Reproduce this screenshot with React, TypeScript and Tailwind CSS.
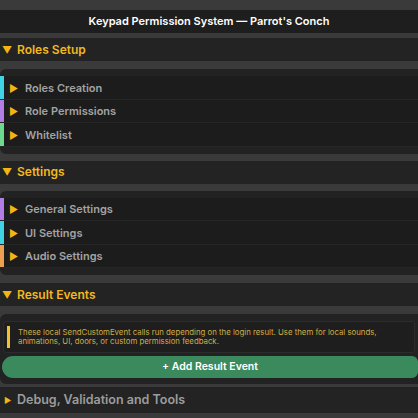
const font = { fontFamily: "Inter, 'Noto Sans', sans-serif" };

type Row = { label: string; bar: string };

const rolesRows: Row[] = [
  { label: "Roles Creation", bar: "bg-[#3fd3e3]" },
  { label: "Role Permissions", bar: "bg-[#b27ee6]" },
  { label: "Whitelist", bar: "bg-[#6ed98e]" },
];

const settingsRows: Row[] = [
  { label: "General Settings", bar: "bg-[#b27ee6]" },
  { label: "UI Settings", bar: "bg-[#3fd3e3]" },
  { label: "Audio Settings", bar: "bg-[#eda04f]" },
];

function SectionHeader({ title }: { title: string }) {
  return (
    <div className="h-[23px] bg-[#232323] flex items-center pl-[2px]">
      <span className="text-[#f4b512] text-[10px] w-[15px] leading-none">▼</span>
      <span className="text-[#f2b81f] text-[12px] font-semibold">{title}</span>
    </div>
  );
}

function Foldout({ row }: { row: Row }) {
  return (
    <div className="h-[23.5px] flex items-stretch bg-[#1c1c1c] border-b border-[#262626]">
      <div className={`w-[4px] ${row.bar}`} />
      <div className="flex items-center pl-[5px] pt-[1px]">
        <span className="text-[#f4b512] text-[10px] w-[16px] leading-none">▶</span>
        <span className="text-[#a3a3a3] text-[11px] font-semibold">{row.label}</span>
      </div>
    </div>
  );
}

function Panel({ children }: { children: React.ReactNode }) {
  return (
    <div className="bg-[#222222] rounded-l-[6px] py-[7px] flex flex-col">{children}</div>
  );
}

export default function App() {
  return (
    <div className="w-[418px] h-[418px] bg-[#3a3a3a] overflow-hidden pt-[10px] flex flex-col" style={font}>
      <div className="h-[23px] bg-[#1e1e1e] flex items-center justify-center text-white text-[11px] font-semibold">
        Keypad Permission System — Parrot's Conch
      </div>
      <div className="h-[5px]" />
      <SectionHeader title="Roles Setup" />
      <div className="h-[8px]" />
      <Panel>
        {rolesRows.map((r) => (
          <Foldout key={r.label} row={r} />
        ))}
      </Panel>
      <div className="h-[7px]" />
      <SectionHeader title="Settings" />
      <div className="h-[7px]" />
      <Panel>
        {settingsRows.map((r) => (
          <Foldout key={r.label} row={r} />
        ))}
      </Panel>
      <div className="h-[8px]" />
      <SectionHeader title="Result Events" />
      <div className="h-[8px]" />
      <div className="bg-[#222222] rounded-l-[6px] pt-[7px] pb-[6px] flex flex-col">
        <div className="mx-[3px] h-[32px] bg-[#1e1e1e] border border-[#2c2c2c] rounded-[3px] flex items-center pl-[3px]">
          <div className="w-[3px] h-[22px] bg-[#f2c12e] shrink-0" />
          <p className="pl-[8px] text-[#d0ad45] text-[7.8px] leading-[9.5px] whitespace-nowrap">
            These local SendCustomEvent calls run depending on the login result. Use them for local sounds,
            <br />
            animations, UI, doors, or custom permission feedback.
          </p>
        </div>
        <button className="mt-[3px] ml-[2px] h-[22px] bg-[#3b8a5d] rounded-l-[11px] rounded-r-[6px] text-white text-[10.5px] font-semibold">
          + Add Result Event
        </button>
      </div>
      <div className="h-[3px]" />
      <div className="h-[26px] bg-[#232323] flex items-center pl-[4px]">
        <span className="text-[#f4b512] text-[8px] w-[13px] leading-none">▶</span>
        <span className="text-[#9c9c9c] text-[12.5px] font-semibold">Debug, Validation and Tools</span>
      </div>
    </div>
  );
}
